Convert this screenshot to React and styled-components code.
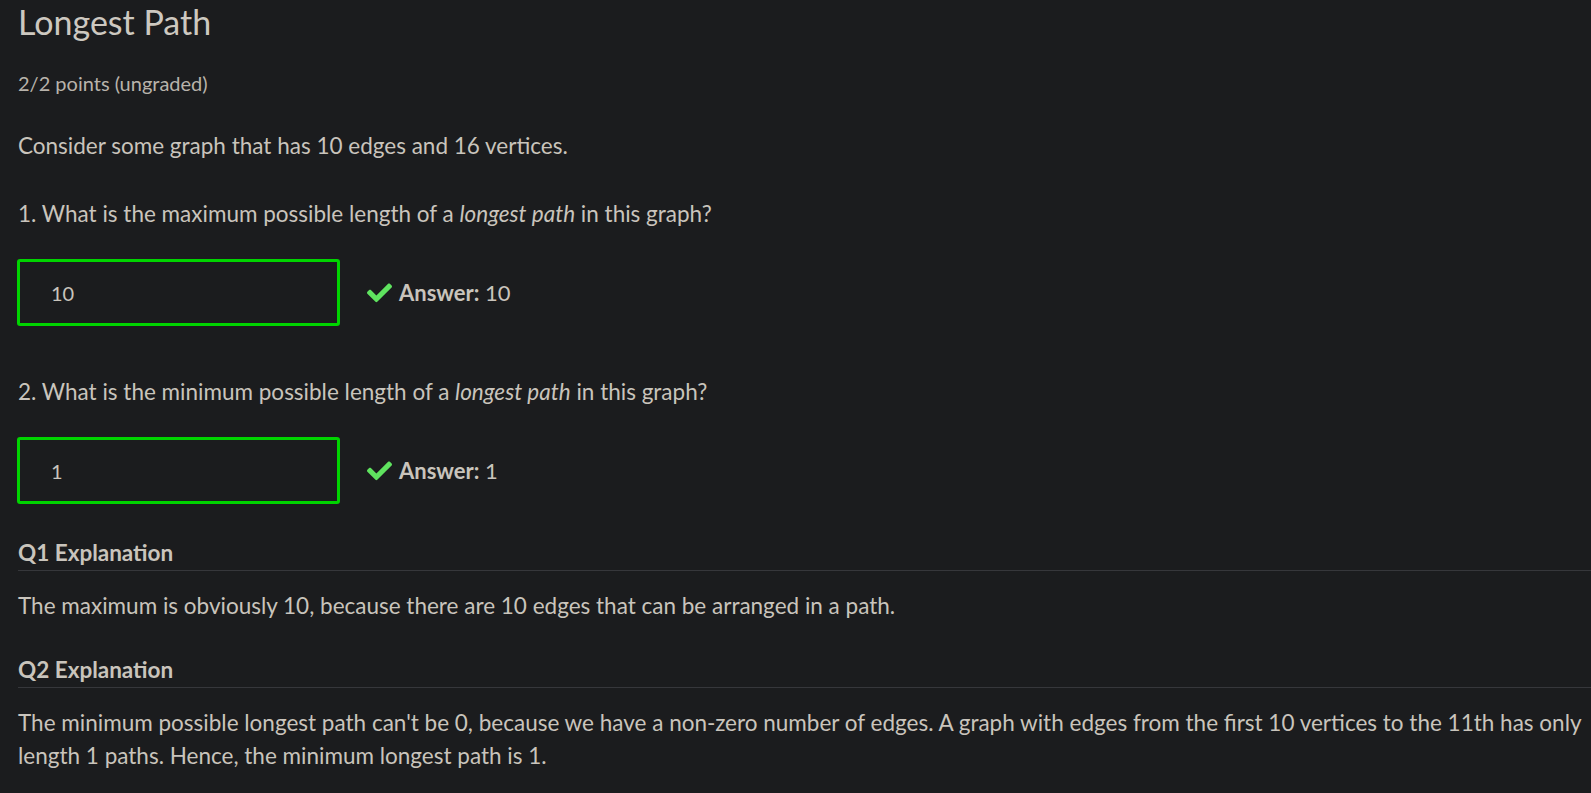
import React from 'react';
import styled, {createGlobalStyle} from 'styled-components';

const GlobalStyle = createGlobalStyle`
  html, body {
    margin: 0;
    padding: 0;
    background: #1b1c1e;
  }
  body {
    font-family: Lato, "Noto Sans", sans-serif;
    color: #c9c4bc;
    overflow: hidden;
  }
`;

const CheckSvg = () => (
    <svg width="25" height="20" viewBox="0 64 512 392" aria-hidden="true">
        <path fill="#5fe35f"
              d="M173.9 439.4l-166.4-166.4c-10-10-10-26.2 0-36.2l36.2-36.2c10-10 26.2-10 36.2 0L192 312.7 432.1 72.6c10-10 26.2-10 36.2 0l36.2 36.2c10 10 10 26.2 0 36.2l-294.4 294.4c-10 10-26.2 10-36.2 0z"/>
    </svg>
);

const Problem = ({pre, post, answer, value}) => (
    <div>
        <Prompt>{pre}<em>longest path</em>{post}</Prompt>
        <AnswerRow>
            <InputBox>{value}</InputBox>
            <Status>
                <CheckSvg/>
                <strong>Answer:</strong>&nbsp;{answer}
            </Status>
        </AnswerRow>
    </div>
);

const App = () => {
    return (
        <Page>
            <GlobalStyle/>
            <Title>Longest Path</Title>
            <Points>2/2 points (ungraded)</Points>
            <Intro>Consider some graph that has 10 edges and 16 vertices.</Intro>
            <Problems>
                <Problem pre="1. What is the maximum possible length of a " post=" in this graph?"
                         value="10" answer="10"/>
                <Problem pre="2. What is the minimum possible length of a " post=" in this graph?"
                         value="1" answer="1"/>
            </Problems>
            <Explanation>
                <ExplainHead>Q1 Explanation</ExplainHead>
                <Paragraph>The maximum is obviously 10, because there are 10 edges that can be arranged in a path.</Paragraph>
            </Explanation>
            <Explanation>
                <ExplainHead>Q2 Explanation</ExplainHead>
                <Paragraph>
                    The minimum possible longest path can't be 0, because we have a non-zero number of edges. A graph
                    with edges from the first 10 vertices to the 11th has only length 1 paths. Hence, the minimum
                    longest path is 1.
                </Paragraph>
            </Explanation>
        </Page>
    )
}

const Page = styled.div`
  padding: 0 8px 0 18px;
  width: 1591px;
  box-sizing: border-box;
`;

const Title = styled.h2`
  margin: 0;
  font-size: 34px;
  font-weight: 400;
  line-height: 44px;
  color: #cdc8c0;
`;

const Points = styled.div`
  margin-top: 27px;
  font-size: 20px;
  line-height: 24px;
  color: #b8b3ab;
`;

const Paragraph = styled.p`
  margin: 0;
  font-size: 22.5px;
  line-height: 33px;
`;

const Intro = styled(Paragraph)`
  margin: 34px 0 35px;
`;

const Prompt = styled(Paragraph)`
  em {
    font-style: italic;
  }
`;

const Problems = styled.div`
  display: flex;
  flex-direction: column;
  gap: 49px;
  margin-bottom: 35px;
`;

const AnswerRow = styled.div`
  display: flex;
  align-items: center;
  margin: 29px 0 0 -1px;
`;

const InputBox = styled.div`
  box-sizing: border-box;
  width: 323px;
  height: 67px;
  border: 3px solid #00d400;
  border-radius: 3px;
  padding: 0 0 0 31px;
  display: flex;
  align-items: center;
  font-size: 20px;
`;

const Status = styled.div`
  display: flex;
  align-items: center;
  margin-left: 27px;
  font-size: 22px;

  svg {
    margin-right: 7px;
  }

  strong {
    font-weight: 700;
  }
`;

const Explanation = styled.section`
  margin-bottom: 34px;
`;

const ExplainHead = styled.div`
  font-size: 22.5px;
  font-weight: 700;
  line-height: 28px;
  padding-bottom: 3px;
  border-bottom: 1px solid #36373b;
  margin-bottom: 18px;
  margin-right: -8px;
`;

export default App;
